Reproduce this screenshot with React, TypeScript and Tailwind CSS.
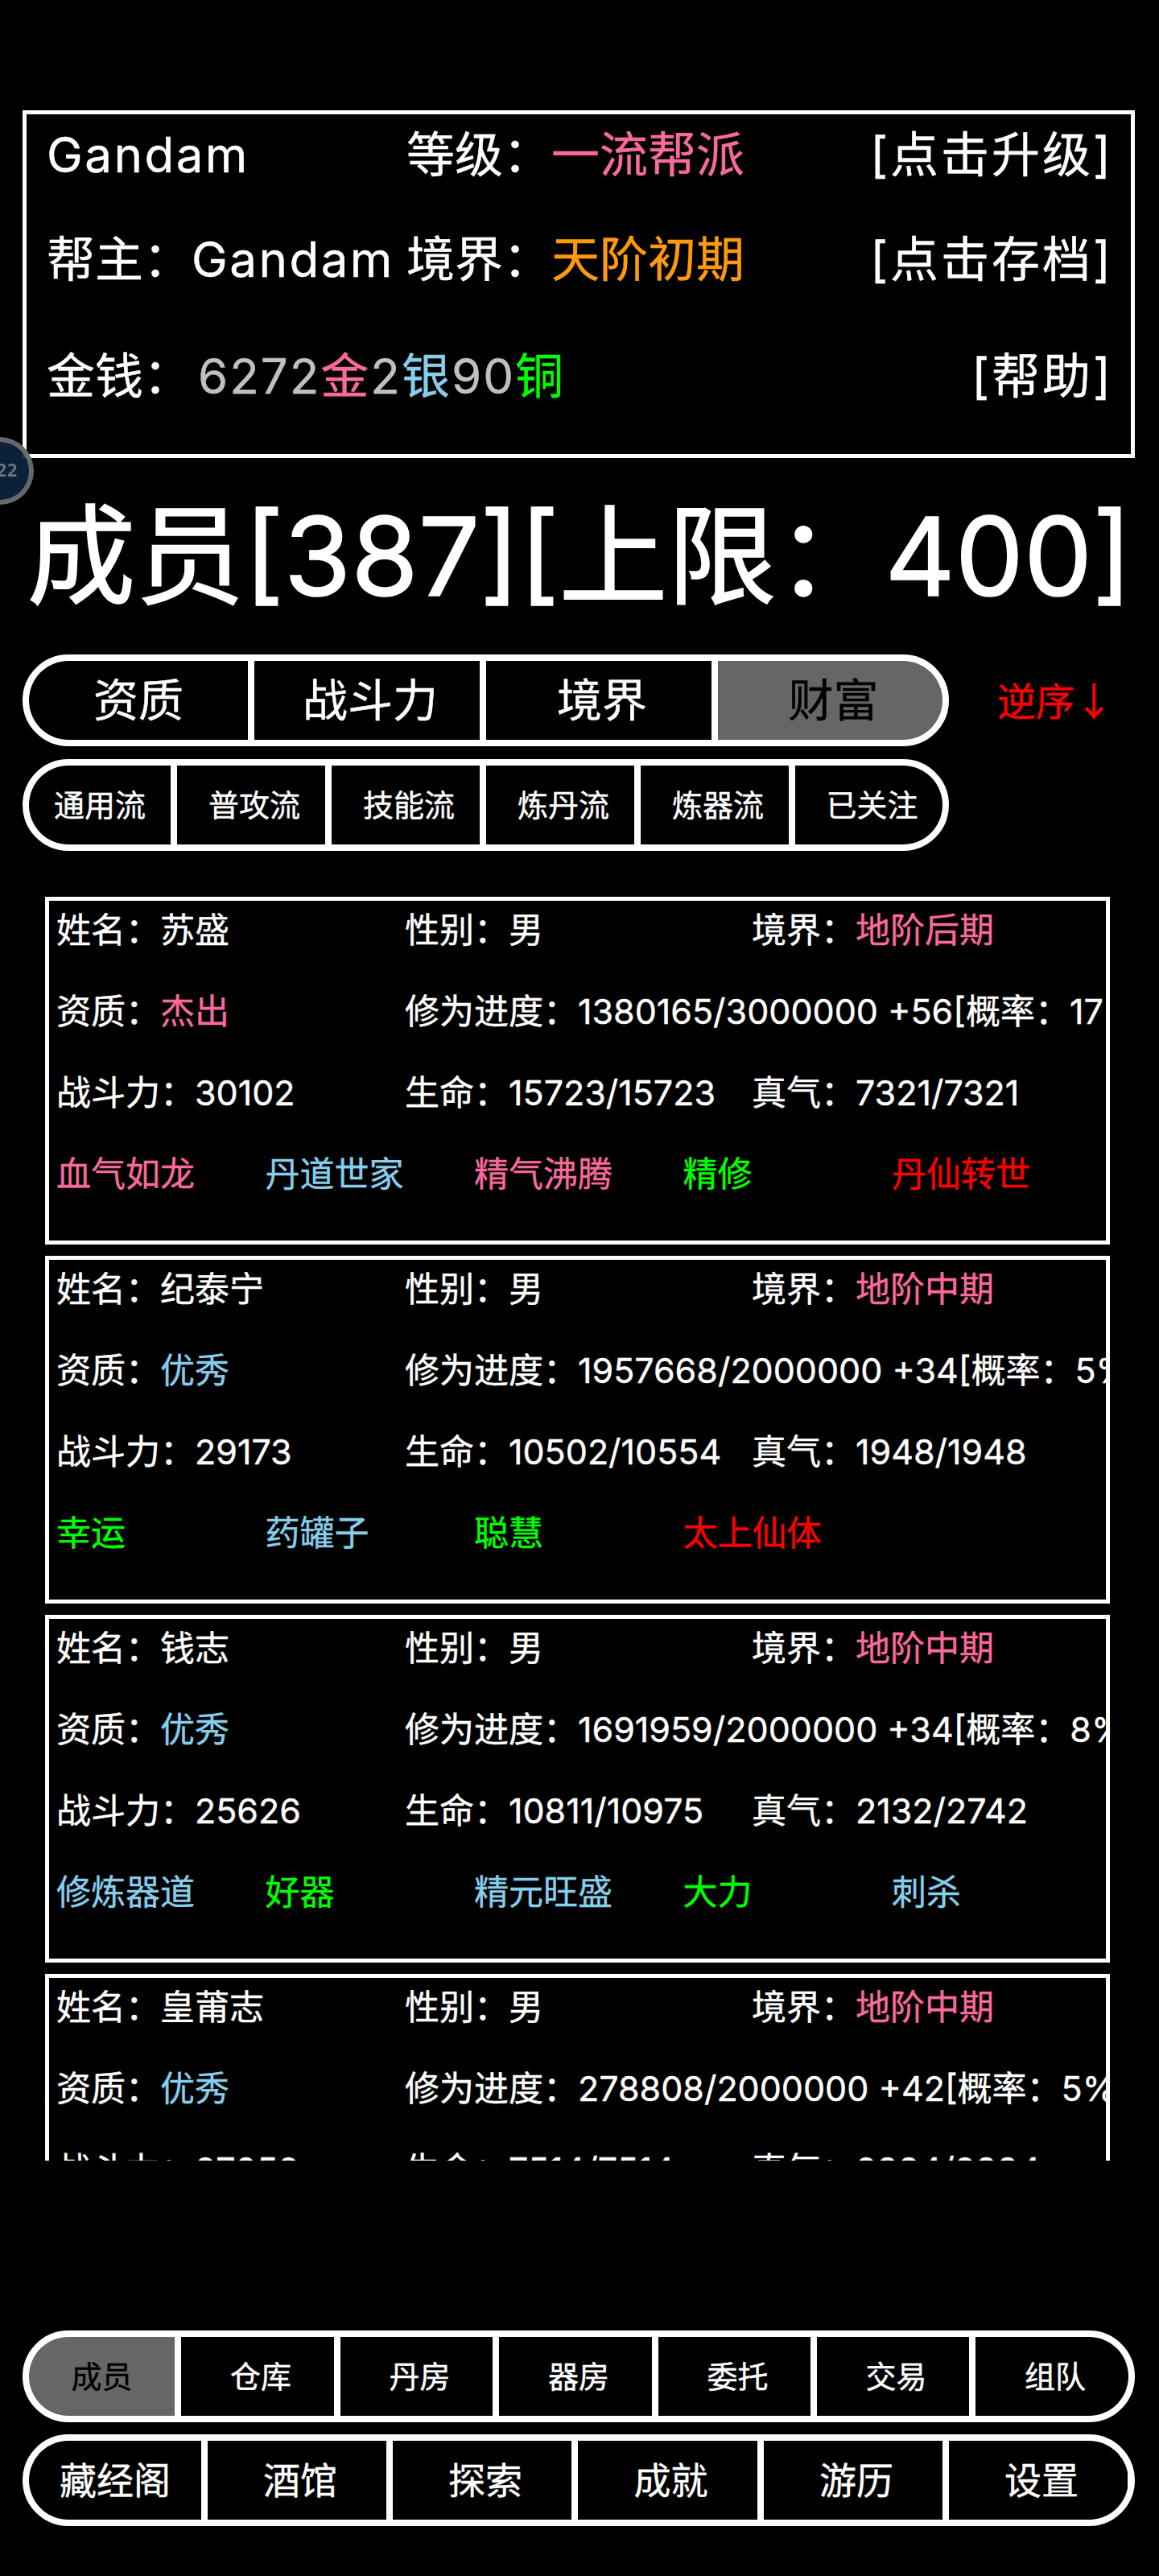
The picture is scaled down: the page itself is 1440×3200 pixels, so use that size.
const FONT = "font-['Inter','Noto_Sans_CJK_SC',sans-serif]"

const PINK = "text-[#f76a9b]"
const BLUE = "text-[#87ceeb]"
const GREEN = "text-[#00ff00]"
const RED = "text-[#ff0000]"

interface Member {
  name: string
  realm: string
  quality: string
  qualityColor: string
  progress: string
  power: string
  life: string
  qi: string
  tags: { label: string; color: string }[]
}

const members: Member[] = [
  {
    name: "苏盛",
    realm: "地阶后期",
    quality: "杰出",
    qualityColor: PINK,
    progress: "1380165/3000000 +56[概率：17%]",
    power: "30102",
    life: "15723/15723",
    qi: "7321/7321",
    tags: [
      { label: "血气如龙", color: PINK },
      { label: "丹道世家", color: BLUE },
      { label: "精气沸腾", color: PINK },
      { label: "精修", color: GREEN },
      { label: "丹仙转世", color: RED },
    ],
  },
  {
    name: "纪泰宁",
    realm: "地阶中期",
    quality: "优秀",
    qualityColor: BLUE,
    progress: "1957668/2000000 +34[概率：5%]",
    power: "29173",
    life: "10502/10554",
    qi: "1948/1948",
    tags: [
      { label: "幸运", color: GREEN },
      { label: "药罐子", color: BLUE },
      { label: "聪慧", color: GREEN },
      { label: "太上仙体", color: RED },
    ],
  },
  {
    name: "钱志",
    realm: "地阶中期",
    quality: "优秀",
    qualityColor: BLUE,
    progress: "1691959/2000000 +34[概率：8%]",
    power: "25626",
    life: "10811/10975",
    qi: "2132/2742",
    tags: [
      { label: "修炼器道", color: BLUE },
      { label: "好器", color: GREEN },
      { label: "精元旺盛", color: BLUE },
      { label: "大力", color: GREEN },
      { label: "刺杀", color: BLUE },
    ],
  },
  {
    name: "皇莆志",
    realm: "地阶中期",
    quality: "优秀",
    qualityColor: BLUE,
    progress: "278808/2000000 +42[概率：5%]",
    power: "27052",
    life: "7514/7514",
    qi: "2884/2884",
    tags: [],
  },
]

function SegmentBar({
  items,
  widths,
  active,
  text,
  className,
}: {
  items: string[]
  widths: number[]
  active?: string
  text: string
  className: string
}) {
  return (
    <div className={`flex gap-2 h-[114px] border-8 border-white rounded-[57px] bg-white overflow-hidden ${className}`}>
      {items.map((item, index) => (
        <div
          key={item}
          style={{ width: widths[index] }}
          className={`flex items-center justify-center ${index > 0 ? "pl-2" : ""} ${text} ${
            item === active ? "bg-[#666666] text-black" : "bg-black text-white"
          }`}
        >
          {item}
        </div>
      ))}
    </div>
  )
}

function MemberCard({ member }: { member: Member }) {
  return (
    <div className="shrink-0 w-[1323px] h-[432px] ml-[56px] border-[5px] border-white pl-[9px] overflow-hidden text-[43px] text-white flex flex-col gap-[29px] whitespace-nowrap">
      <div className="flex h-[72px] items-center">
        <div className="shrink-0 w-[433px]">姓名：{member.name}</div>
        <div className="shrink-0 w-[431px]">性别：男</div>
        <div>
          境界：<span className={PINK}>{member.realm}</span>
        </div>
      </div>
      <div className="flex h-[72px] items-center">
        <div className="shrink-0 w-[433px]">
          资质：<span className={member.qualityColor}>{member.quality}</span>
        </div>
        <div className="shrink-0">修为进度：{member.progress}</div>
      </div>
      <div className="flex h-[72px] items-center">
        <div className="shrink-0 w-[433px]">战斗力：{member.power}</div>
        <div className="shrink-0 w-[431px]">生命：{member.life}</div>
        <div>真气：{member.qi}</div>
      </div>
      <div className="flex h-[72px] items-center">
        {member.tags.map((tag) => (
          <div key={tag.label} className={`shrink-0 w-[259.5px] ${tag.color}`}>
            {tag.label}
          </div>
        ))}
      </div>
    </div>
  )
}

export default function App() {
  return (
    <div className={`relative w-[1440px] h-[3200px] bg-black overflow-hidden pt-[137px] [-webkit-text-stroke:0.4px_currentColor] ${FONT}`}>
      <div className="ml-[28px] w-[1382px] h-[432px] border-[5px] border-white pl-[25px] pr-[22px] text-[60px] text-white whitespace-nowrap">
        <div className="flex items-center h-[100px]">
          <div className="w-[447px] tracking-[2.5px]">Gandam</div>
          <div>
            等级：<span className={PINK}>一流帮派</span>
          </div>
          <div className="ml-auto tracking-[3px]">[点击升级]</div>
        </div>
        <div className="flex items-center h-[100px] mt-[30px]">
          <div className="w-[447px]">
            帮主：<span className="tracking-[2.5px]">Gandam</span>
          </div>
          <div>
            境界：<span className="text-[#ff9a0a]">天阶初期</span>
          </div>
          <div className="ml-auto tracking-[3px]">[点击存档]</div>
        </div>
        <div className="flex items-center h-[100px] mt-[45px]">
          <div>
            金钱：
            <span className="ml-2 tracking-[2px]">
              <span className="text-[#c0c0c0]">6272</span>
              <span className={PINK}>金</span>
              <span className="text-[#c0c0c0]">2</span>
              <span className={BLUE}>银</span>
              <span className="text-[#c0c0c0]">90</span>
              <span className={GREEN}>铜</span>
            </span>
          </div>
          <div className="ml-auto tracking-[3px]">[帮助]</div>
        </div>
      </div>

      <div className="h-[244px] flex items-center justify-center text-[135px] text-white whitespace-nowrap [-webkit-text-stroke:1.5px_currentColor]">
        成员[387][上限：400]
      </div>

      <div className="flex items-center">
        <SegmentBar
          className="ml-[28px] w-[1151px]"
          text="text-[56px]"
          items={["资质", "战斗力", "境界", "财富"]}
          widths={[272, 280, 280, 279]}
          active="财富"
        />
        <div className={`ml-[60px] text-[48px] ${RED}`}>
          逆序<span className="font-['Noto_Sans_CJK_SC',sans-serif]">↓</span>
        </div>
      </div>
      <SegmentBar
        className="ml-[28px] mt-4 w-[1151px]"
        text="text-[38px]"
        items={["通用流", "普攻流", "技能流", "炼丹流", "炼器流", "已关注"]}
        widths={[176, 184, 184, 184, 184, 183]}
      />

      <div className="mt-[57px] h-[1570px] overflow-hidden flex flex-col gap-[14px]">
        {members.map((member) => (
          <MemberCard key={member.name} member={member} />
        ))}
      </div>

      <SegmentBar
        className="ml-[28px] mt-[211px] w-[1382px]"
        text="text-[38px]"
        items={["成员", "仓库", "丹房", "器房", "委托", "交易", "组队"]}
        widths={[181, 190, 189, 190, 189, 189, 190]}
        active="成员"
      />
      <SegmentBar
        className="ml-[28px] mt-[15px] w-[1382px]"
        text="text-[46px]"
        items={["藏经阁", "酒馆", "探索", "成就", "游历", "设置"]}
        widths={[214, 222, 222, 223, 222, 222]}
      />

      {/* floating debug bubble over the left edge */}
      <div className="absolute left-[-42px] top-[543px] w-[84px] h-[84px] rounded-full border-[6px] border-[#7a7a7a]/80 bg-[#0d2440]/90 flex items-center justify-end pr-[14px]">
        <span className="font-['DejaVu_Sans_Mono',monospace] font-bold text-[22px] leading-none text-[#6b7380] [-webkit-text-stroke:0]">22</span>
      </div>
    </div>
  )
}
